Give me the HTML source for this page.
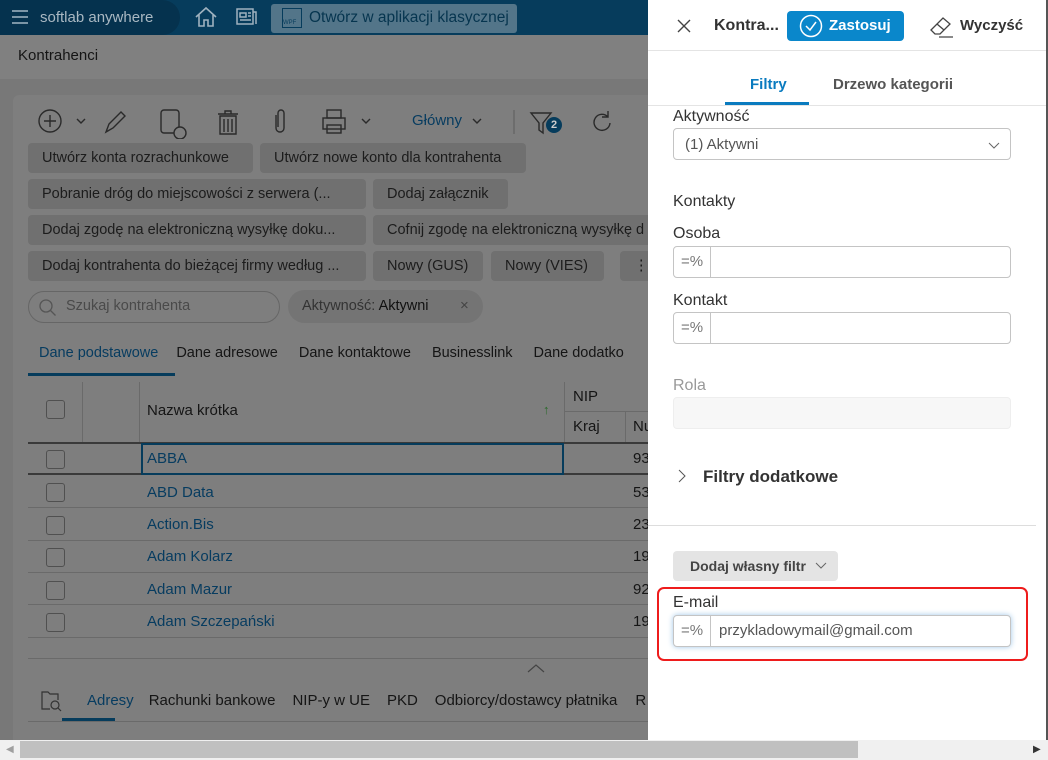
<!DOCTYPE html><html><head><meta charset="utf-8"><style>
*{box-sizing:border-box;margin:0;padding:0}
body{width:1048px;height:760px;overflow:hidden;position:relative;font-family:"Liberation Sans",sans-serif;background:#787878;color:#151515;font-size:15px}
.a{position:absolute}
.chip{position:absolute;height:30px;background:#707070;border-radius:4px;padding:0 14px;line-height:30px;font-size:14.5px;color:#1c1c1c;white-space:nowrap;overflow:hidden}
.lnk{color:#073c60}
.row{position:absolute;left:28px;width:620px;height:32px;border-bottom:1px solid #6a6a6a}
.cb{position:absolute;left:18px;width:19px;height:19px;border:1px solid #505050;border-radius:3px}
.lbl{position:absolute;left:673px;font-size:16px;color:#333}
.inp{position:absolute;left:673px;width:338px;height:32px;border:1px solid #c4c4c4;border-radius:4px;background:#fff}
.pct{position:absolute;left:0;top:0;width:37px;height:100%;border-right:1px solid #c4c4c4;text-align:center;line-height:30px;color:#777;font-size:15px}
</style></head><body>
<div class="a" style="left:0;top:0;width:648px;height:35px;background:#063c5c"></div>
<div class="a" style="left:0;top:0;width:180px;height:35px;background:#05324e;border-radius:0 40px 40px 0"></div>
<div class="a" style="left:12px;top:10px;width:16px;height:2px;background:#7b95a6;box-shadow:0 6px 0 #7b95a6,0 12px 0 #7b95a6"></div>
<div class="a" style="left:40px;top:9px;color:#a9b8c2;font-size:15px">softlab anywhere</div>
<svg class="a" style="left:194px;top:6px" width="24" height="22" viewBox="0 0 24 22" fill="none" stroke="#9fb2bf" stroke-width="1.6"><path d="M2 11 L12 2 L22 11 M5 9 V20 H10 V14 H14 V20 H19 V9"/></svg>
<svg class="a" style="left:236px;top:8px" width="22" height="18" fill="none" stroke="#9fb2bf" stroke-width="1.5"><rect x="1" y="1" width="16" height="15"/><path d="M4 5h6v4H4zM12 5h3M12 8h3M4 12h11M17 4h3v12"/></svg>
<div class="a" style="left:271px;top:4px;width:246px;height:29px;background:#537589;border-radius:3px"></div>
<div class="a" style="left:282px;top:8px;width:20px;height:20px;border:1px solid #063c5c;font-size:6px;color:#063c5c;padding-top:11px">WPF</div>
<div class="a" style="left:309px;top:9px;color:#06354f;font-size:15.5px">Otwórz w aplikacji klasycznej</div>
<div class="a" style="left:0;top:35px;width:648px;height:44px;background:#808080"></div>
<div class="a" style="left:18px;top:47px;font-size:15px">Kontrahenci</div>
<div class="a" style="left:13px;top:95px;width:640px;height:650px;background:#7e7e7e;border-radius:6px"></div>
<svg class="a" style="left:30px;top:105px" width="620" height="34" fill="none" stroke="#2a2a2a" stroke-width="1.4">
<circle cx="20" cy="16" r="11"/><path d="M20 10v12M14 16h12"/><path d="M47 14l4 4 4-4"/>
<path d="M76 27l3-8 12-12 4 4-12 12z"/>
<rect x="131" y="5" width="18" height="23" rx="3"/><circle cx="150" cy="28" r="6" fill="#7e7e7e"/>
<path d="M188 9h20M195 9V6h6v3M190 11h16v18h-16zM194 14v13M198 14v13M202 14v13"/>
<path d="M246 10v13a4 4 0 0 0 8 0V8a3 3 0 0 0-6 0v14"/>
<rect x="293" y="13" width="22" height="11"/><rect x="297" y="5" width="14" height="8"/><rect x="297" y="20" width="14" height="8"/><path d="M332 14l4 4 4-4"/>
<path d="M443 14l4 4 4-4"/><path d="M484 5v24" stroke="#666"/>
<path d="M501 8h20l-8 10v10l-4-3v-7z"/><path d="M578 12a8 8 0 1 0 2 6M578 6v6h-6"/>
</svg>
<div class="a" style="left:546px;top:117px;width:16px;height:16px;border-radius:50%;background:#063c5c;color:#ccc;font-size:11px;font-weight:bold;text-align:center;line-height:16px">2</div>
<div class="a" style="left:412px;top:112px;color:#073c60;font-size:15px">Główny</div>
<div class="chip" style="left:28px;top:143px;width:225px">Utwórz konta rozrachunkowe</div>
<div class="chip" style="left:260px;top:143px;width:266px">Utwórz nowe konto dla kontrahenta</div>
<div class="chip" style="left:28px;top:179px;width:338px">Pobranie dróg do miejscowości z serwera (...</div>
<div class="chip" style="left:373px;top:179px;width:135px">Dodaj załącznik</div>
<div class="chip" style="left:28px;top:215px;width:338px">Dodaj zgodę na elektroniczną wysyłkę doku...</div>
<div class="chip" style="left:373px;top:215px;width:290px">Cofnij zgodę na elektroniczną wysyłkę d</div>
<div class="chip" style="left:28px;top:251px;width:338px">Dodaj kontrahenta do bieżącej firmy według ...</div>
<div class="chip" style="left:373px;top:251px;width:110px">Nowy (GUS)</div>
<div class="chip" style="left:491px;top:251px;width:113px">Nowy (VIES)</div>
<div class="chip" style="left:620px;top:251px;width:40px">⋮</div>
<div class="a" style="left:28px;top:291px;width:252px;height:32px;border:1px solid #666;border-radius:16px"></div>
<svg class="a" style="left:38px;top:298px" width="20" height="20" fill="none" stroke="#555" stroke-width="1.3"><circle cx="8" cy="8" r="6"/><path d="M12.5 12.5l5 5"/></svg>
<div class="a" style="left:66px;top:298px;color:#4a4a4a;font-size:14.5px">Szukaj kontrahenta</div>
<div class="a" style="left:288px;top:290px;width:195px;height:33px;background:#747474;border-radius:17px"></div>
<div class="a" style="left:302px;top:298px;color:#333;font-size:14.5px">Aktywność: <span style="color:#111">Aktywni</span></div>
<div class="a" style="left:460px;top:297px;color:#444">×</div>
<div class="a" style="left:39px;top:345px;font-size:14.5px;white-space:nowrap"><span class="lnk">Dane podstawowe</span><span style="margin-left:18px">Dane adresowe</span><span style="margin-left:21px">Dane kontaktowe</span><span style="margin-left:21px">Businesslink</span><span style="margin-left:21px">Dane dodatko</span></div>
<div class="a" style="left:28px;top:373px;width:147px;height:3px;background:#063c5c"></div>
<div class="a" style="left:28px;top:382px;width:620px;height:62px;border-bottom:2px solid #3a3a3a"></div>
<div class="a" style="left:82px;top:382px;width:1px;height:60px;background:#6a6a6a"></div>
<div class="a" style="left:139px;top:382px;width:1px;height:60px;background:#6a6a6a"></div>
<div class="a" style="left:564px;top:382px;width:1px;height:60px;background:#6a6a6a"></div>
<div class="a" style="left:564px;top:411px;width:84px;height:1px;background:#6a6a6a"></div>
<div class="a" style="left:625px;top:411px;width:1px;height:31px;background:#6a6a6a"></div>
<div class="cb" style="left:46px;top:400px"></div>
<div class="a" style="left:147px;top:402px">Nazwa krótka</div>
<div class="a" style="left:543px;top:402px;color:#2a6a2a;font-size:13px">↑</div>
<div class="a" style="left:573px;top:388px">NIP</div>
<div class="a" style="left:573px;top:418px">Kraj</div>
<div class="a" style="left:633px;top:418px">Nu</div>
<div class="row" style="top:443px;border-bottom:2px solid #3a3a3a"><div class="cb" style="top:7px"></div><div class="a" style="left:113px;top:0;width:423px;height:32px;border:2px solid #063c5c"></div><div class="a lnk" style="left:119px;top:7px">ABBA</div><div class="a" style="left:605px;top:7px">93</div></div>
<div class="row" style="top:476px"><div class="cb" style="top:7px"></div><div class="a lnk" style="left:119px;top:8px">ABD Data</div><div class="a" style="left:605px;top:8px">53</div></div>
<div class="row" style="top:509px"><div class="cb" style="top:7px"></div><div class="a lnk" style="left:119px;top:7px">Action.Bis</div><div class="a" style="left:605px;top:7px">23</div></div>
<div class="row" style="top:541px"><div class="cb" style="top:7px"></div><div class="a lnk" style="left:119px;top:7px">Adam Kolarz</div><div class="a" style="left:605px;top:7px">19</div></div>
<div class="row" style="top:573px"><div class="cb" style="top:8px"></div><div class="a lnk" style="left:119px;top:8px">Adam Mazur</div><div class="a" style="left:605px;top:8px">92</div></div>
<div class="row" style="top:606px"><div class="cb" style="top:7px"></div><div class="a lnk" style="left:119px;top:7px">Adam Szczepański</div><div class="a" style="left:605px;top:7px">19</div></div>
<div class="a" style="left:28px;top:658px;width:620px;height:1px;background:#6a6a6a"></div>
<svg class="a" style="left:526px;top:662px" width="20" height="12" fill="none" stroke="#444" stroke-width="1.2"><path d="M2 10l8-7 8 7"/></svg>
<svg class="a" style="left:40px;top:690px" width="24" height="24" fill="none" stroke="#333" stroke-width="1.2"><path d="M10 19H2V2h6l2 2h8v6"/><circle cx="15" cy="15" r="4"/><path d="M18 18l3 3"/></svg>
<div class="a" style="left:87px;top:692px;white-space:nowrap;font-size:15px"><span class="lnk">Adresy</span><span style="margin-left:15px">Rachunki bankowe</span><span style="margin-left:17px">NIP-y w UE</span><span style="margin-left:17px">PKD</span><span style="margin-left:17px">Odbiorcy/dostawcy płatnika</span><span style="margin-left:18px">R</span></div>
<div class="a" style="left:62px;top:718px;width:53px;height:3px;background:#063c5c"></div>
<div class="a" style="left:28px;top:721px;width:620px;height:1px;background:#6a6a6a"></div>
<div class="a" style="left:648px;top:0;width:398px;height:740px;background:#fff"></div>
<div class="a" style="left:1046px;top:0;width:2px;height:740px;background:#555"></div>
<div class="a" style="left:648px;top:50px;width:398px;height:1px;background:#e4e4e4"></div>
<svg class="a" style="left:676px;top:18px" width="16" height="16" stroke="#444" stroke-width="1.4"><path d="M2 2l12 12M14 2L2 14"/></svg>
<div class="a" style="left:714px;top:17px;font-size:16px;font-weight:bold;color:#333">Kontra...</div>
<div class="a" style="left:787px;top:11px;width:117px;height:30px;background:#0a87cb;border-radius:4px"></div>
<svg class="a" style="left:799px;top:14px" width="24" height="24" fill="none" stroke="#fff" stroke-width="1.5"><circle cx="12" cy="12" r="10.5"/><path d="M7 12l4 4 6-8"/></svg>
<div class="a" style="left:829px;top:17px;color:#fff;font-weight:bold;font-size:15px">Zastosuj</div>
<svg class="a" style="left:929px;top:14px" width="26" height="24" fill="none" stroke="#444" stroke-width="1.3"><path d="M2 16l12-12 7 6-10 10H6z M8 10l7 6 M10 23h14"/></svg>
<div class="a" style="left:960px;top:17px;color:#333;font-weight:bold;font-size:15px">Wyczyść</div>
<div class="a" style="left:750px;top:76px;color:#0a7bbf;font-weight:bold;font-size:15px">Filtry</div>
<div class="a" style="left:833px;top:76px;color:#555;font-weight:bold;font-size:15px">Drzewo kategorii</div>
<div class="a" style="left:725px;top:102px;width:84px;height:3px;background:#0a7bbf"></div>
<div class="a" style="left:648px;top:105px;width:398px;height:1px;background:#e4e4e4"></div>
<div class="lbl" style="top:108px">Aktywność</div>
<div class="inp" style="top:128px;height:32px"><div class="a" style="left:11px;top:7px;color:#555;font-size:15px">(1) Aktywni</div><svg class="a" style="left:313px;top:11px" width="14" height="10" fill="none" stroke="#666"><path d="M2 3l5 5 5-5"/></svg></div>
<div class="lbl" style="top:193px">Kontakty</div>
<div class="lbl" style="top:225px">Osoba</div>
<div class="inp" style="top:246px"><div class="pct">=%</div></div>
<div class="lbl" style="top:292px">Kontakt</div>
<div class="inp" style="top:312px"><div class="pct">=%</div></div>
<div class="lbl" style="top:377px;color:#999">Rola</div>
<div class="inp" style="top:397px;background:#f7f7f7;border-color:#eee"></div>
<svg class="a" style="left:677px;top:468px" width="10" height="16" fill="none" stroke="#555"><path d="M2 2l6 6-6 6"/></svg>
<div class="a" style="left:703px;top:467px;font-size:17px;font-weight:bold;color:#333">Filtry dodatkowe</div>
<div class="a" style="left:648px;top:525px;width:388px;height:1px;background:#ddd"></div>
<div class="a" style="left:673px;top:551px;width:165px;height:30px;background:#e4e4e4;border-radius:4px"></div>
<div class="a" style="left:690px;top:558px;color:#444;font-weight:bold;font-size:14px">Dodaj własny filtr</div>
<svg class="a" style="left:814px;top:561px" width="14" height="10" fill="none" stroke="#666"><path d="M2 2l5 5 5-5"/></svg>
<div class="a" style="left:657px;top:587px;width:371px;height:74px;border:2px solid #ee1c1c;border-radius:7px"></div>
<div class="lbl" style="top:594px">E-mail</div>
<div class="inp" style="top:615px;box-shadow:0 0 6px #9fc6e8"><div class="pct">=%</div><div class="a" style="left:45px;top:6px;color:#555;font-size:15px">przykladowymail@gmail.com</div></div>
<div class="a" style="left:0;top:740px;width:1048px;height:20px;background:#f0f0f0"></div>
<div class="a" style="left:20px;top:741px;width:838px;height:17px;background:#c0c0c0"></div>
<div class="a" style="left:6px;top:744px;font-size:10px;color:#a0a0a0">◀</div>
<div class="a" style="left:1033px;top:744px;font-size:10px;color:#333">▶</div>
</body></html>
